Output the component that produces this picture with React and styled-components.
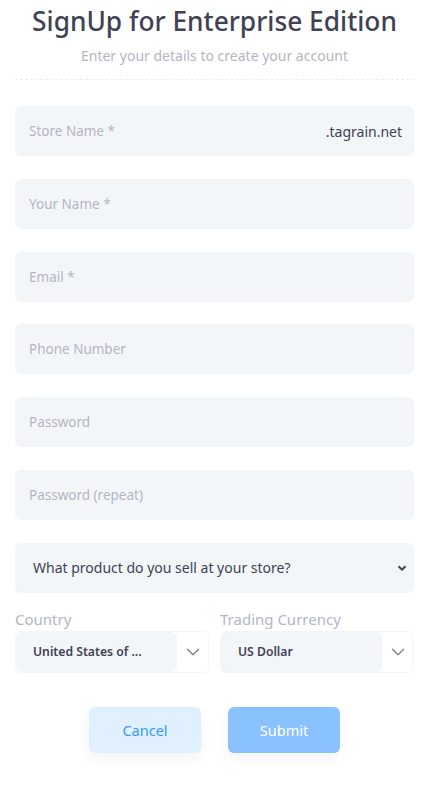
import React from 'react';
import styled, { createGlobalStyle } from 'styled-components';
import { ChevronDown } from 'lucide-react';

const GlobalStyle = createGlobalStyle`
  html, body {
    margin: 0;
    padding: 0;
    background: #ffffff;
  }
  body {
    font-family: 'Noto Sans', 'Open Sans', sans-serif;
    color: #3f4254;
  }
  * {
    box-sizing: border-box;
  }
`;

const Page = styled.div`
  width: 429px;
  padding: 0 15px 40px;
`;

const Header = styled.div`
  text-align: center;
  padding-bottom: 14px;
  border-bottom: 1px dashed #ebedf3;
  margin-bottom: 26px;
`;

const Title = styled.h3`
  margin: 0;
  padding-top: 5px;
  font-size: 26.3px;
  font-weight: 500;
  line-height: 32px;
  color: #3f4254;
`;

const Subtitle = styled.div`
  margin-top: 10px;
  font-size: 14px;
  line-height: 18px;
  color: #b5b5c3;
`;

const Form = styled.div`
  display: flex;
  flex-direction: column;
  gap: 22.8px;
`;

const Field = styled.div`
  display: flex;
  align-items: center;
  height: 50px;
  background: #f3f6f9;
  border-radius: 6px;
  padding: 0 12px 0 14px;
  font-size: 13.5px;
`;

const Placeholder = styled.span`
  flex: 1;
  color: #b5b5c3;
`;

const Suffix = styled.span`
  color: #3f4254;
  font-size: 14px;
`;

const SelectField = styled(Field)`
  padding: 0 6px 0 18px;
  justify-content: space-between;
  font-size: 14px;
  color: #3f4254;
`;

const Row = styled.div`
  display: grid;
  grid-template-columns: 1fr 1fr;
  column-gap: 11px;
  margin-top: -7px;
`;

const Group = styled.div`
  display: flex;
  flex-direction: column;
`;

const Label = styled.label`
  font-size: 15px;
  line-height: 20px;
  color: #b5b5c3;
  margin-bottom: 2px;
`;

const Combo = styled.div`
  display: flex;
  height: 42px;
  border: 1px solid #f3f6f9;
  border-radius: 6px;
  overflow: hidden;
`;

const ComboValue = styled.div`
  flex: 1;
  display: flex;
  align-items: center;
  background: #f3f6f9;
  padding-left: 17px;
  font-size: 12.2px;
  font-weight: 600;
  color: #3f4254;
  border-radius: 6px;
  white-space: nowrap;
`;

const ComboToggle = styled.div`
  width: 31px;
  display: flex;
  align-items: center;
  justify-content: center;
  color: #7e8299;
`;

const Actions = styled.div`
  display: flex;
  justify-content: center;
  gap: 27px;
  margin-top: 34px;
`;

const Button = styled.button`
  width: 112px;
  height: 46px;
  border: none;
  border-radius: 6px;
  font-family: inherit;
  font-size: 14.5px;
  font-weight: 400;
  background: ${(p) => (p.primary ? '#89c2ff' : '#e1f0ff')};
  color: ${(p) => (p.primary ? '#ffffff' : '#3699ff')};
  box-shadow: 0 6px 14px rgba(82, 63, 105, 0.06);
`;

const SmallChevron = () => (
  <svg width="12" height="12" viewBox="0 0 12 12">
    <path d="M2.5 4.2 L6 7.6 L9.5 4.2" fill="none" stroke="#3f4254" strokeWidth="2" />
  </svg>
);

const inputs = [
  'Your Name *',
  'Email *',
  'Phone Number',
  'Password',
  'Password (repeat)',
];

const App = () => (
  <>
    <GlobalStyle />
    <Page>
      <Header>
        <Title>SignUp for Enterprise Edition</Title>
        <Subtitle>Enter your details to create your account</Subtitle>
      </Header>
      <Form>
        <Field>
          <Placeholder>Store Name *</Placeholder>
          <Suffix>.tagrain.net</Suffix>
        </Field>
        {inputs.map((text) => (
          <Field key={text}>
            <Placeholder>{text}</Placeholder>
          </Field>
        ))}
        <SelectField>
          <span>What product do you sell at your store?</span>
          <SmallChevron />
        </SelectField>
        <Row>
          <Group>
            <Label>Country</Label>
            <Combo>
              <ComboValue>United States of ...</ComboValue>
              <ComboToggle>
                <ChevronDown size={22} strokeWidth={1.5} />
              </ComboToggle>
            </Combo>
          </Group>
          <Group>
            <Label>Trading Currency</Label>
            <Combo>
              <ComboValue>US Dollar</ComboValue>
              <ComboToggle>
                <ChevronDown size={22} strokeWidth={1.5} />
              </ComboToggle>
            </Combo>
          </Group>
        </Row>
      </Form>
      <Actions>
        <Button>Cancel</Button>
        <Button primary>Submit</Button>
      </Actions>
    </Page>
  </>
);

export default App;
